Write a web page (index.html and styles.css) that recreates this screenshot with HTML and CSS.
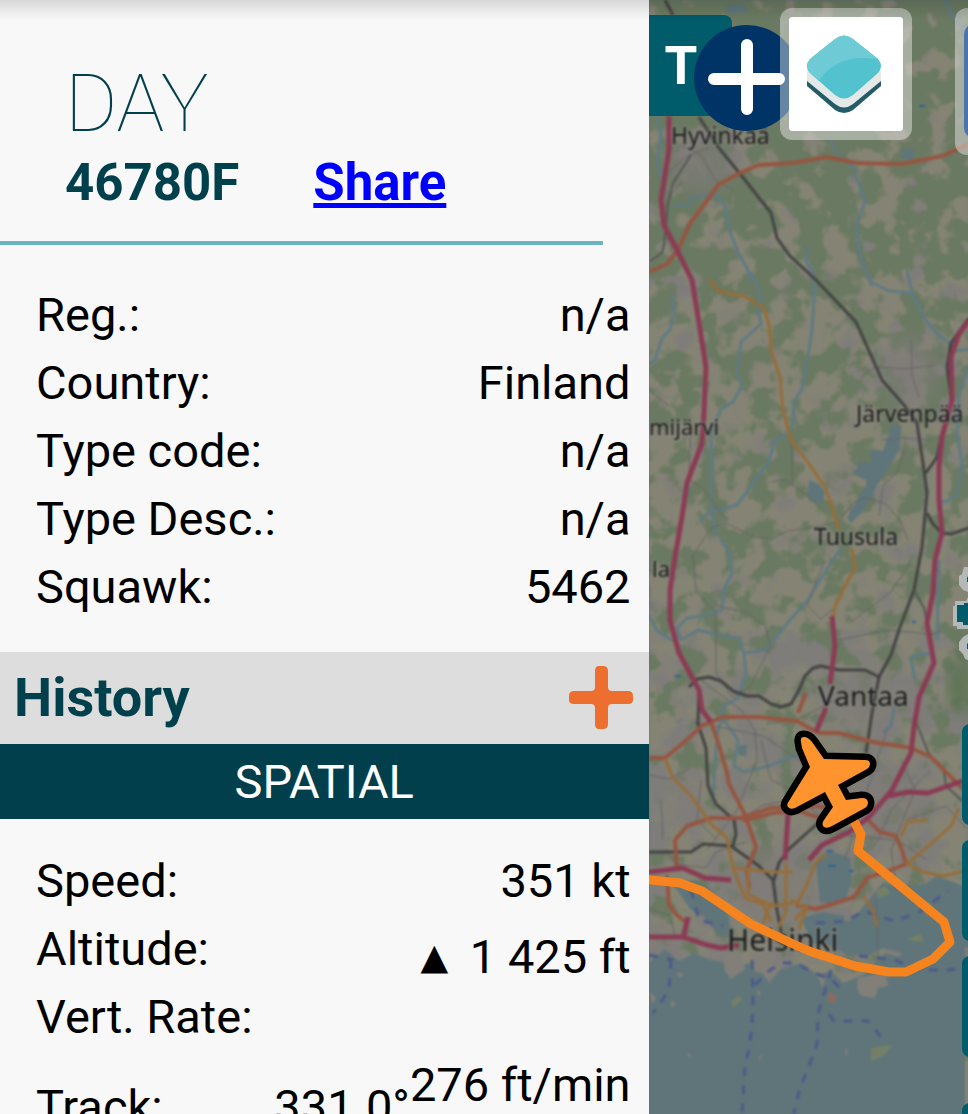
FILE: index.html
```html
<!DOCTYPE html>
<html lang="en">
  <head>
    <meta charset="UTF-8" />
    <meta name="viewport" content="width=device-width, initial-scale=1.0" />
    <title>DAY</title>
    <link rel="stylesheet" href="styles.css" />
  </head>
  <body>
    <aside class="sidebar">
      <header class="flight-header">
        <h1 class="callsign">DAY</h1>
        <div class="ident">
          <h2 class="hex">46780F</h2>
          <a class="share" href="#share">Share</a>
        </div>
      </header>
      <dl class="info">
        <dt>Reg.:</dt>
        <dd>n/a</dd>
        <dt>Country:</dt>
        <dd>Finland</dd>
        <dt>Type code:</dt>
        <dd>n/a</dd>
        <dt>Type Desc.:</dt>
        <dd>n/a</dd>
        <dt>Squawk:</dt>
        <dd>5462</dd>
      </dl>
      <div class="history">
        <h2>History</h2>
        <button class="expand" type="button" aria-label="Expand history">
          <svg viewBox="0 0 64 64">
            <path d="M30 0h4q5 0 5 5v16q0 4 4 4h16q5 0 5 5v4q0 4-5 4H43q-4 0-4 4v16q0 5-5 5h-4q-4 0-4-5V42q0-4-4-4H5q-5 0-5-4v-4q0-5 5-5h17q4 0 4-4V5q0-5 4-5z" />
          </svg>
        </button>
      </div>
      <h3 class="section-title">SPATIAL</h3>
      <dl class="info">
        <dt>Speed:</dt>
        <dd>351 kt</dd>
        <dt>Altitude:</dt>
        <dd class="altitude"><span class="climb">▲</span>&nbsp;1 425 ft</dd>
        <dt>Vert. Rate:</dt>
        <dd class="vert-rate">276 ft/min</dd>
        <dt class="track">Track:</dt>
        <dd class="track">331.0°</dd>
      </dl>
    </aside>
    <main class="map">
      <svg class="map-canvas" viewBox="648 0 320 1114" preserveAspectRatio="xMinYMin slice">
        <defs>
          <linearGradient id="density" x1="0" y1="0" x2="0" y2="1">
            <stop offset="0" stop-opacity=".64" />
            <stop offset=".22" stop-opacity=".58" />
            <stop offset=".3" stop-opacity=".5" />
            <stop offset=".48" stop-opacity=".5" />
            <stop offset=".58" stop-opacity=".46" />
            <stop offset=".72" stop-opacity=".38" />
            <stop offset="1" stop-opacity=".36" />
          </linearGradient>
          <filter id="forest" x="0" y="0" width="1" height="1" color-interpolation-filters="sRGB">
            <feTurbulence type="fractalNoise" baseFrequency=".04" numOctaves="4" seed="8" result="noise" />
            <feComposite in="SourceGraphic" in2="noise" operator="arithmetic" k2=".5" k3=".5" />
            <feColorMatrix values="0 0 0 0 .416  0 0 0 0 .475  0 0 0 0 .38  0 0 0 18 -8.7" />
          </filter>
          <filter id="town" x="0" y="0" width="1" height="1" color-interpolation-filters="sRGB">
            <feTurbulence type="fractalNoise" baseFrequency=".03" numOctaves="3" seed="21" result="noise" />
            <feComposite in="SourceGraphic" in2="noise" operator="arithmetic" k2=".5" k3=".5" />
            <feColorMatrix values="0 0 0 0 .498  0 0 0 0 .49  0 0 0 0 .478  0 0 0 9 -4.3" />
          </filter>
          <filter id="soft"><feGaussianBlur stdDeviation="9" /></filter>
        </defs>

        <g class="tiles">
        <rect class="land" x="648" width="320" height="1114" />
        <g filter="url(#town)">
          <rect x="648" width="320" height="1114" fill-opacity=".42" />
          <ellipse cx="700" cy="165" rx="48" ry="45" fill-opacity=".35" />
          <ellipse cx="912" cy="370" rx="42" ry="55" fill-opacity=".35" />
          <rect x="648" y="630" width="320" height="400" fill-opacity=".22" />
        </g>
        <g filter="url(#forest)">
          <rect x="648" width="320" height="1114" fill="url(#density)" />
        </g>
        <g class="town" filter="url(#soft)">
          <ellipse cx="700" cy="166" rx="34" ry="28" />
          <ellipse cx="908" cy="372" rx="28" ry="36" />
          <ellipse cx="860" cy="700" rx="45" ry="30" />
          <ellipse cx="775" cy="890" rx="50" ry="46" />
          <ellipse cx="680" cy="800" rx="16" ry="30" />
          <ellipse cx="870" cy="800" rx="60" ry="36" />
        </g>
        <path class="wood" filter="url(#soft)" d="M968 640l-10 20-12 25 8 24 14 6z" />

        <!-- sea, bays and lakes -->
        <g class="water">
          <path d="M648 963l16-14 14 12 16-8 12 6 18 4 10 10 12-10 14 8 8 12 12-14 20-6 16 12 14-4 12 12 20-8 22-22 14 4 16-22 22 6 28-12v203H648z" />
          <path d="M672 884l22-4 20 14 14 22 2 22-14-4-14-18-12-6z" />
          <path d="M815 860l12-10 22 8 2 22-6 18-12 6-14-2z" />
          <path d="M858 912l24-30 20 6 22-4 12-8 32 12v60l-22-6-12 14-18-10-12 8-22-6-16 8-20-2-24-12 4-18 24-4z" />
          <path d="M800 918l22-6 22 4-8 26-24 2z" />
          <path d="M891 424l9 3-1 22-13 21-10 15-7 15-9 13-10 10-4-5 10-18 8-12 2-7-15-8 6-6-2-6 16 2-2-14 13 2z" />
          <path d="M808 480l10 4 6 8-3 12-9-2-6-8z" />
          <path d="M726 4l18 1 3 6-16 3-6-3z" />
          <path d="M902 148l12 2-2 10-12-2z" />
          <path d="M738 745l8 0-1 11-8-1z" />
        </g>
        <g class="islands">
          <path d="M857 978l28-6 2 14-10 2-3 10-14-2-4-8z" />
          <path d="M722 955l18-4 4 18-14 10-6-8zM750 954l28-2-10 22-14-2zM816 976l8 2-2 10z" />
          <path d="M649 992l6 6-4 6zM676 972l7 2-5 4zM670 1000l5 4-5 4zM686 1053l4 1-1 5zM758 1057l4-2-3 7zM844 1050l3-2-1 10zM756 990l4 2-3 5z" />
        </g>
        <path class="isle-green" d="M870 1048l11-2 11-1-10 11-12 5zM730 1001l9-6 2 5-9 7zM875 890l10-4 4 8-12 4zM920 900l12 6-6 10zM905 940l14-6 4 8z" />
        <path class="isle-red" d="M827 992l9 3-3 9-6-3z" />

        <!-- rivers -->
        <g class="river">
          <path d="M672 205l16 0 2-7 12-2 14-1 8 11 5 26 9 22 8 14 4 12" />
          <path d="M828 135l6 16 17 16 8 20 5 15-9 25 6 35 10 24" />
          <path d="M656 116l4 20-4 25 6 20 2 8M944 0l9 18 15 18" />
          <path d="M808 249l-3 12 6 10 3 10-3 50-7 45-4 15-7 10-1 23-5 10-13 6-4 14-3 9-17 23-14 19-26 7-12 8" />
          <path d="M750 272l9 22-1 20 2 10-20 18-4 30 5 14-9 16-12 7-6 14-4 6 0 80 5 26" />
          <path d="M671 294l2 18-4 18-8 8-7 22-6 4" />
          <path d="M870 282l18 9 23 2 14 27 9 12 14 11 6 8 14-2M906 270l5 22" />
          <path d="M968 365l-10 30-2 38 5 30-4 30-10 8-7 1" />
          <path d="M840 548l-16 24-17 28-18 20-24 30-22 3-6-15-18-3-22-5-17 10-4-12 10-10 20-3 15-5 2-22 8-14-2-20-9-14" />
          <path d="M743 653l2 20-8 25-14 8-7 30-4 60M723 720l14 20-4 26 10 6 25-6 20-8 12-4M648 615l8 16 16 10" />
          <path d="M914 680l-4-22 10-4 10 0M893 708l-3 18-8 6M938 560l-2 80" />
        </g>

        <!-- minor roads -->
        <g class="minor">
          <path d="M648 390l10 8 10 8M648 775l20 4 20-10M690 420l-2 60 14 8 14 20 10 12" />
          <path d="M666 174l20-18 22-8M672 255l-12-40 10-20 12-14M680 145l20 10 14 25 18 10" />
          <path d="M860 377l14-10 30 2 30-4M910 340l1 35 7 22M770 482l14-2 20 14 16 14M790 440l2 46" />
          <path d="M690 558l20-30 15-5 28 14 18 2 16-8 30-5 20-4 16-20 12-4 20 6 14 16 8 20M880 440l22-2 28 2M878 516l4-30 14-14 8-22" />
          <path d="M692 556l3 36 20 20 0 60 16 25 18-10 20-40-4-20-20-15-30-6" />
          <path d="M824 560l-18 45 14 14 12-10M838 640l50-10 40 4 12-2M850 622l40-30 20-30" />
          <path d="M693 722l30 6 40 8 20 14 30 20 50 10M700 680l40 30 14 20 2 30-20 50-30 40" />
          <path d="M740 820l20-14 26-6 20 6 40 30 50 4 30 20M760 740l10 40 40 20 30-20 38-10M905 820l40-14 20 22M930 770l-40 40-14 32" />
          <path d="M650 910l20 6 4 22 24 0M665 850l10 14 30 4 10-16 30-10M700 780l-4 40 20 20M660 800l2 40" />
          <path d="M886 730l-20 60-22 70M900 760l14 30-24 60 6 40M835 700l-40 20-30 4M875 900l2 54" />
        </g>

        <!-- ferry lines -->
        <g class="ferry">
          <path d="M751 960l1 50-3 35-5 20-3 49" />
          <path d="M830 970l-7 24-6 20-1 30-9 25-8 18-6 27" />
          <path d="M828 1014l5 7 34 0 10 12 6 10" />
          <path d="M670 960l-2 30-10 15-6 8M754 985l14-14 12-8 14 0 16 8 22 10 10 10" />
          <path d="M815 923l30-2 18-10 30 10 24-8 30-22M858 956l36 4 24 10 30 0 20-4M690 890l8 30 24 6M648 955l24 5" />
        </g>

        <!-- railways -->
        <g class="rail">
          <path d="M664 0l8 15M698 117L718 148L744 180L770 213L776 238L788 255L815 280L855 322L881 380L903 405L916 423L923 470L926 493L921 547L913 590L898 630L890 655L878 677L871 713L865 753" />
          <path d="M968 318L950 343L946 367L951 402M942 430L936 457L925 473M926 513L932 524L941 533L950 534L968 528" />
          <path d="M878 677l-14-7-26 0-18-4-8 2-8 8-6 14-8 14-10 3-10-3-12-8-12 0-14-5-12-10-12-4-12 2-8 8" />
          <path d="M698 690l-1 34 8 24 2 38 8 18 18 16 2 14-3 12M648 852l42 0 12-8 28 2 28 20 14 14 4 30 6 32" />
          <path d="M826 815l-18 16-20 18-10 14-6 20" />
        </g>
        <path class="rail-thin" d="M690 155l-18 28-5 20-4 42-2 8-12 8M913 590l10 18 3 15M918 697l-3 25 12 30 16 20 2 14 22 20" />

        <!-- trunk roads -->
        <g class="primary">
          <path d="M648 272l18-8 11-14 12-27 14-18 14-20 20-11 20-9 34-2 35-6 30 6 45 1 40-8 27-12" />
          <path d="M648 758h16l18-15 20-18 20-8 36 0 38 4 14 8 8 4 20 0 34 9 38 6 20 9 20 20 14 14 24 26" />
          <path d="M710 722L718 745L726 773L728 784L745 817L755 847L746 870L748 888M742 821l30-8 26-2 24 8M805 693l-8 20" />
          <path d="M676 870l-2-30 12-14 24-8 30 0 30-10 46-2 30 6M666 875l2 30 8 10 10 8-4 12" />
          <path d="M867 820l12 12 16 4 6 14 4 14-20 8-18 5-14 20-18 6-20 6-20-4" />
        </g>
        <g class="secondary">
          <path d="M708 280L718 291L745 297L763 308L768 325L770 350L779 377L782 410L790 440L806 461L824 487L832 510L838 530M851 548l3 20-10 18-10 20-2 12" />
          <path d="M664 758l8 20 18 18 20 28 16 14 6 30 12 30 18 6 8 18M732 868l40 4 20 0M747 868l0 26 24 12 26-4 10-20 8-20 10-8M785 862l0 50-8 16" />
          <path d="M958 808l-8 18-18 16-26 22 16 8 20 4 26-6M900 836l6-14 20-2M790 900l14 8-10 12M862 896l10 14 4 16M770 902l-8 22M806 905l-8 24" />
        </g>
        <g class="motorway">
          <path d="M668 116L668 150L660 200L663 225L676 250L691 280L698 323L705 367L703 413L701 443L686 483L681 517L674 557L669 590L669 620L678 653L698 690L701 710L710 722" />
          <path d="M968 320L958 334L950 357L951 400L941 437L938 467L938 500L941 533L934 560L932 593L926 623L933 663L918 697L913 727L910 753L891 790L868 817L848 832L821 845L808 860" />
          <path d="M831 616l3 30-5 38M825 708l-10 24M788 800l-4 60M887 796l20-4 20 1 40-14" />
          <path d="M648 872l34-4 22 10 26 2M648 937l34 0 24 8 14 3 18-3" />
          <path d="M683 935l4-18" />
        </g>
        <path class="pool" d="M918 105h6v2h-6zM674 675h6v2h-6zM911 621h4v2h-4zM826 850h6v2h-6zM848 870h5v2h-5zM827 865h8v2h-8z" />

        <g class="places">
          <text x="670" y="144" font-size="23">Hyvinkää</text>
          <text x="648" y="435" font-size="22">mijärvi</text>
          <text x="855" y="422" font-size="23">Järvenpää</text>
          <text x="813" y="545" font-size="23">Tuusula</text>
          <text x="651" y="577" font-size="22">la</text>
          <text x="817" y="706" font-size="28">Vantaa</text>
          <text x="726" y="951" font-size="30">Helsinki</text>
        </g>
        </g>

        <!-- flown track and aircraft -->
        <path class="trail" d="M640 879l39 4 22 8 49 33 40 19 18 8 46 15 34 6h17l27-13 17-17-6-20-86-71 3-17-12-22" />
        <path class="plane" d="M800 742Q799 737 803 737Q807 737 811 742L823 759L864 760Q869 760 869 764Q869 767 866 769L837 785L845 800L861 798Q867 798 867 803Q867 806 864 808L831 826Q826 829 823 827Q820 824 823 820L832 807L824 792L794 808Q789 810 787 807Q785 805 788 801L809 767L801 748Z" />
      </svg>

      <button class="tab" type="button">T</button>
      <button class="add" type="button" aria-label="Add">
        <svg viewBox="0 0 106 106"><path d="M53 20v64M20 54h65" /></svg>
      </button>
      <button class="layers" type="button" aria-label="Layers">
        <svg viewBox="2 0 78 78">
          <path class="layer-dark" d="M2 43v8l28 24q9 6 18 0l28-24v-8z" />
          <path class="layer-light" d="M2 36v10l28 23q9 7 18 0l28-23V36z" />
          <path class="layer-top" d="M30 4q9-7 18 0l25 20q6 7 0 14L48 60q-9 7-18 0L5 38q-6-7 0-14z" />
          <path class="layer-shine" d="M30 4q9-7 18 0l25 20-12-1q-30-1-46 21l-1 2L5 38q-6-7 0-14z" />
        </svg>
      </button>
      <div class="side-box"><span></span></div>
      <svg class="settings" viewBox="0 0 15 94">
        <path class="gear-edge" d="M15 1h-4l-2 7-3 2v9l4 5 5 2zM15 31l-2 4H2v5H0v20h4v3h11zM15 68l-5 3-4 5v8l4 4 2 5 3 1z" />
        <path class="gear" d="M15 10l-1 2v4h1zM15 37h-4v2H4v17h6v3h5zM15 77l-1 1v5h1z" />
      </svg>
      <div class="side-buttons">
        <button type="button" aria-label="Filter"></button>
        <button type="button" aria-label="Labels"></button>
        <button type="button" aria-label="Tracks"></button>
        <button type="button" aria-label="More"></button>
      </div>
    </main>
  </body>
</html>
```

FILE: styles.css
```css
* {
  margin: 0;
  padding: 0;
  box-sizing: border-box;
}
body {
  display: flex;
  height: 100vh;
  overflow: hidden;
  font-family: Roboto, Arial, sans-serif;
  font-size: 47px;
  line-height: 68px;
  color: #000;
}
body::after {
  content: "";
  position: absolute;
  top: 0;
  left: 0;
  width: 100%;
  height: 20px;
  background: linear-gradient(rgba(0, 0, 0, 0.13), rgba(0, 0, 0, 0));
  pointer-events: none;
}
button {
  border: none;
  cursor: pointer;
}

/* sidebar */
.sidebar {
  width: 67%;
  flex-shrink: 0;
  overflow: hidden;
  background: #f8f8f8;
}
.flight-header {
  width: 93%;
  padding: 64px 0 24px 65px;
  border-bottom: 4px solid #6bb5c1;
  color: #003f4c;
}
.callsign {
  font-size: 80px;
  font-weight: 100;
  line-height: 80px;
}
.ident {
  display: flex;
  gap: 74px;
  padding-top: 5px;
}
.hex,
.share {
  font-size: 51px;
  font-weight: bold;
  line-height: 68px;
}
.share {
  color: #0000ff;
}
.info {
  display: grid;
  grid-template-columns: auto 1fr auto;
  padding: 36px 18px 31px 36px;
}
.section-title + .info {
  padding-top: 28px;
}
.info dt {
  grid-column: 1;
}
.info dd {
  grid-column: 2 / 4;
  text-align: right;
}
.info .altitude {
  margin: 8px 0 -8px;
}
.climb {
  margin-right: 10px;
  font-family: "DejaVu Sans", sans-serif;
  font-size: 36px;
  line-height: 36px;
  vertical-align: 4px;
}
.info .vert-rate {
  grid-column: 3;
  grid-row: 4;
}
.info dt.track,
.info dd.track {
  grid-row: 4;
  padding-top: 22px;
}
.info dd.track {
  grid-column: 2;
}
.history {
  display: flex;
  justify-content: space-between;
  align-items: center;
  height: 92px;
  padding: 0 16px 0 14px;
  background: #dddddd;
}
.history h2 {
  font-size: 54px;
  color: #003f4c;
}
.expand {
  width: 64px;
  height: 64px;
  background: none;
}
.expand svg {
  display: block;
  fill: #ee6e30;
}
.section-title {
  height: 75px;
  line-height: 75px;
  text-align: center;
  font-size: 47px;
  font-weight: normal;
  color: #fff;
  background: #023f4c;
}

/* map */
.map {
  position: relative;
  flex: 1;
  min-width: 0;
  overflow: hidden;
  background: #5f757a;
}
.map-canvas {
  display: block;
  width: 100%;
  height: 100%;
}
.map-canvas path {
  stroke-linejoin: round;
}
.tiles {
  filter: blur(1px);
}
.land {
  fill: #858474;
}
.town {
  fill: #7f7c79;
  opacity: 0.7;
}
.wood {
  fill: #526f4c;
}
.water {
  fill: #5f757a;
}
.islands {
  fill: #827f79;
}
.isle-green {
  fill: #748066;
}
.isle-red {
  fill: #8b6a61;
}
.river,
.minor,
.ferry,
.rail,
.rail-thin,
.primary,
.secondary,
.motorway {
  fill: none;
}
.river {
  stroke: #5f7a82;
  stroke-width: 3;
}
.minor {
  stroke: #656364;
  stroke-width: 1;
}
.ferry {
  stroke: #4c5a88;
  stroke-width: 3;
  stroke-dasharray: 9 9;
}
.rail {
  stroke: #434343;
  stroke-width: 3;
}
.rail-thin {
  stroke: #555;
  stroke-width: 2;
}
.primary {
  stroke: #965541;
  stroke-width: 4;
}
.secondary {
  stroke: #966d38;
  stroke-width: 3;
}
.motorway {
  stroke: #8b3b54;
  stroke-width: 5;
}
.pool {
  fill: #2f609a;
}
.places {
  font-family: "Noto Sans", sans-serif;
  fill: #1c1c1c;
  stroke: rgba(140, 140, 135, 0.4);
  stroke-width: 3px;
  paint-order: stroke;
}
.trail {
  fill: none;
  stroke: #f5841f;
  stroke-width: 9;
}
.plane {
  fill: #ff942e;
  stroke: #000;
  stroke-width: 13;
  paint-order: stroke;
}

/* controls over the map */
.tab {
  position: absolute;
  top: 15px;
  left: 0;
  width: 83px;
  height: 101px;
  padding-left: 16px;
  border-radius: 0 8px 0 0;
  background: #005b6b;
  color: #fff;
  font-family: Roboto, Arial, sans-serif;
  font-size: 53px;
  font-weight: bold;
  text-align: left;
}
.add {
  position: absolute;
  top: 25px;
  left: 45px;
  width: 106px;
  height: 106px;
  border-radius: 50%;
  background: #003466;
}
.add svg {
  display: block;
  fill: none;
  stroke: #fff;
  stroke-width: 12;
  stroke-linecap: round;
}
.layers {
  position: absolute;
  top: 8px;
  left: 131px;
  width: 132px;
  height: 132px;
  padding: 18px;
  border: 9px solid rgba(255, 255, 255, 0.4);
  border-radius: 12px;
  background: #fff;
  background-clip: padding-box;
}
.layers svg {
  display: block;
}
.layer-dark {
  fill: #235c68;
}
.layer-light {
  fill: #e4e8e6;
}
.layer-top {
  fill: #53c2cf;
}
.layer-shine {
  fill: #6ecbd5;
}
.side-box {
  position: absolute;
  top: 8px;
  left: 306px;
  width: 132px;
  height: 147px;
  padding: 16px 9px 17px;
  border-radius: 12px;
  background: rgba(255, 255, 255, 0.4);
}
.side-box span {
  display: block;
  height: 100%;
  border-radius: 10px;
  background: #4b73ac;
}
.settings {
  position: absolute;
  top: 566px;
  right: 0;
  width: 15px;
  height: 94px;
}
.gear-edge {
  fill: #b4b8b7;
}
.gear {
  fill: #005b6b;
}
.side-buttons {
  position: absolute;
  top: 724px;
  left: 313px;
  display: flex;
  flex-direction: column;
  gap: 15px;
}
.side-buttons button {
  width: 101px;
  height: 101px;
  border-radius: 8px;
  background: #005b6b;
}
.side-buttons button:last-child {
  margin-top: 31px;
}
```
